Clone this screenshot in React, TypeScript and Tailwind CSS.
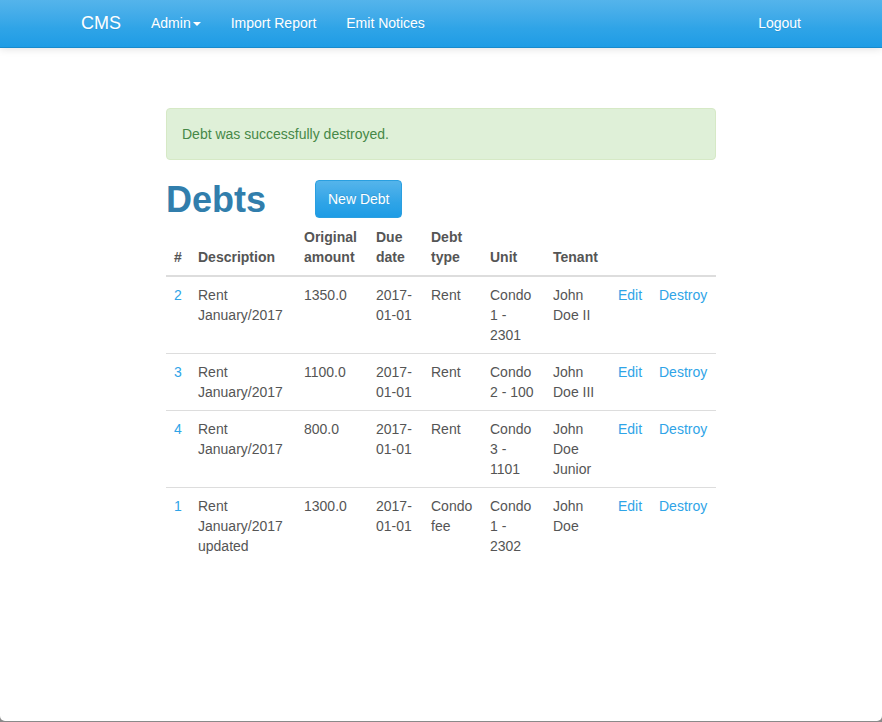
import React from 'react';

type Debt = {
  id: number;
  description: string;
  amount: string;
  due: string;
  type: string;
  unit: string;
  tenant: string;
};

const debts: Debt[] = [
  { id: 2, description: 'Rent January/2017', amount: '1350.0', due: '2017-01-01', type: 'Rent', unit: 'Condo 1 - 2301', tenant: 'John Doe II' },
  { id: 3, description: 'Rent January/2017', amount: '1100.0', due: '2017-01-01', type: 'Rent', unit: 'Condo 2 - 100', tenant: 'John Doe III' },
  { id: 4, description: 'Rent January/2017', amount: '800.0', due: '2017-01-01', type: 'Rent', unit: 'Condo 3 - 1101', tenant: 'John Doe Junior' },
  { id: 1, description: 'Rent January/2017 updated', amount: '1300.0', due: '2017-01-01', type: 'Condo fee', unit: 'Condo 1 - 2302', tenant: 'John Doe' },
];

const Navbar: React.FC = () => (
  <nav className="h-[48px] border-b border-[#178acc] bg-linear-to-b from-[#54b4eb] via-[#2fa4e7] via-60% to-[#1d9ce5] shadow-[0_1px_8px_rgba(0,0,0,0.12)]">
    <div className="w-[750px] mx-auto px-[15px] pb-[1px] h-full flex items-center text-white [text-shadow:0_1px_0_rgba(0,0,0,0.08)]">
      <a className="text-[18px] leading-[20px] mr-[15px]">CMS</a>
      <a className="px-[15px] flex items-center">
        Admin
        <span className="ml-[2px] mt-[1px] inline-block w-0 h-0 border-x-[4px] border-x-transparent border-t-[4px] border-t-white" />
      </a>
      <a className="px-[15px]">Import Report</a>
      <a className="px-[15px]">Emit Notices</a>
      <a className="ml-auto px-[15px] -mr-[15px]">Logout</a>
    </div>
  </nav>
);

const App: React.FC = () => {
  return (
    <div className="h-[722px] bg-[#8a8a8a] overflow-hidden" style={{ fontFamily: '"Liberation Sans", Arial, sans-serif' }}>
      <div className="h-[721px] bg-white rounded-b-[5px] text-[14px] leading-[20px] text-[#555555]">
        <Navbar />

        <div className="w-[550px] mx-auto mt-[60px]">
          <div className="border border-[#d6e9c6] bg-[#dff0d8] text-[#468847] p-[15px] rounded-[4px] mb-[20px]">
            Debt was successfully destroyed.
          </div>

          <div className="flex items-start h-[39px]">
            <h1 className="w-[149px] text-[36px] leading-[40px] font-bold text-[#317eac]">Debts</h1>
            <button className="h-[38px] px-[12px] rounded-[4px] border border-[#2a9fe0] text-white bg-linear-to-b from-[#54b4eb] via-[#2fa4e7] via-60% to-[#1d9ce5] [text-shadow:0_-1px_0_rgba(0,0,0,0.1)]">
              New Debt
            </button>
          </div>

          <table className="w-full table-fixed border-collapse">
            <colgroup>
              <col className="w-[24px]" />
              <col className="w-[106px]" />
              <col className="w-[72px]" />
              <col className="w-[55px]" />
              <col className="w-[59px]" />
              <col className="w-[63px]" />
              <col className="w-[65px]" />
              <col className="w-[41px]" />
              <col className="w-[65px]" />
            </colgroup>
            <thead>
              <tr className="border-b-2 border-[#dddddd]">
                {['#', 'Description', 'Original amount', 'Due date', 'Debt type', 'Unit', 'Tenant', '', ''].map((h, i) => (
                  <th key={i} className="p-[8px] text-left align-bottom font-bold">
                    {h}
                  </th>
                ))}
              </tr>
            </thead>
            <tbody>
              {debts.map((d, idx) => (
                <tr key={d.id} className={idx === 0 ? '' : 'border-t border-[#dddddd]'}>
                  <td className="p-[8px] align-top text-[#2fa4e7]">{d.id}</td>
                  <td className="p-[8px] align-top">{d.description}</td>
                  <td className="p-[8px] align-top">{d.amount}</td>
                  <td className="p-[8px] align-top">{d.due}</td>
                  <td className="p-[8px] align-top">{d.type}</td>
                  <td className="p-[8px] align-top">{d.unit}</td>
                  <td className="p-[8px] align-top">{d.tenant}</td>
                  <td className="p-[8px] align-top text-[#2fa4e7]">Edit</td>
                  <td className="p-[8px] align-top text-[#2fa4e7]">Destroy</td>
                </tr>
              ))}
            </tbody>
          </table>
        </div>
      </div>
    </div>
  );
};

export default App;
